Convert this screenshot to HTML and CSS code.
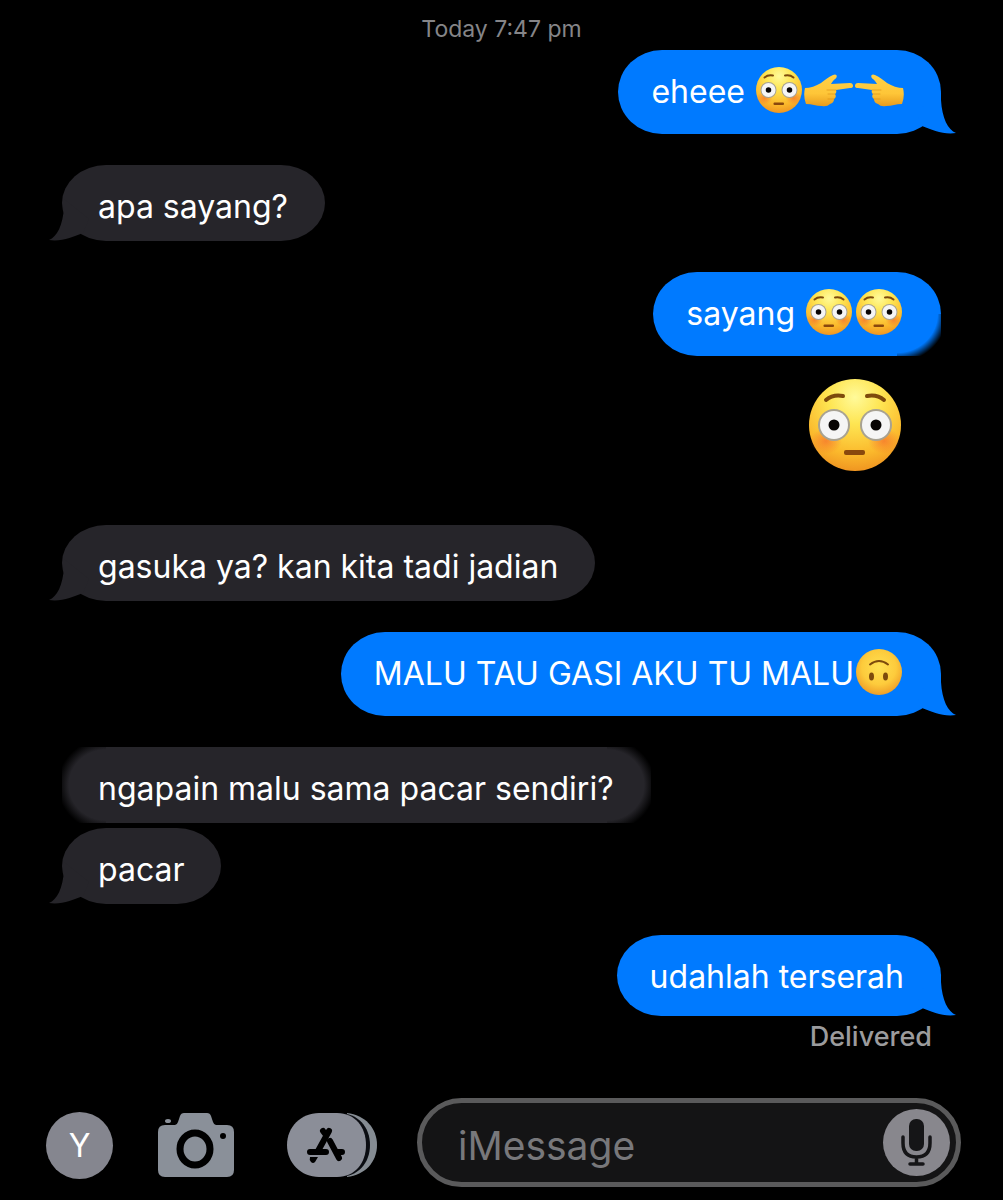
FILE: index.html
```html
<!DOCTYPE html>
<html lang="id">
<head>
<meta charset="utf-8">
<meta name="viewport" content="width=device-width, initial-scale=1">
<title>Messages</title>
<link rel="stylesheet" href="styles.css">
</head>
<body>
<svg class="defs" aria-hidden="true">
  <defs>
    <radialGradient id="face" cx="50%" cy="20%" r="82%">
      <stop offset="0" stop-color="#fffa9a"/>
      <stop offset=".35" stop-color="#fee552"/>
      <stop offset=".75" stop-color="#fbb92c"/>
      <stop offset="1" stop-color="#ef9220"/>
    </radialGradient>
    <radialGradient id="face-flat" cx="50%" cy="40%" r="62%">
      <stop offset="0" stop-color="#ffe052"/>
      <stop offset=".6" stop-color="#fdcb3c"/>
      <stop offset="1" stop-color="#ee9a26"/>
    </radialGradient>
    <radialGradient id="blush">
      <stop offset="0" stop-color="#f5672c" stop-opacity=".65"/>
      <stop offset="1" stop-color="#f5672c" stop-opacity="0"/>
    </radialGradient>
    <linearGradient id="skin" x1="0" y1="0" x2="0" y2="1">
      <stop offset="0" stop-color="#ffd147"/>
      <stop offset=".6" stop-color="#fec638"/>
      <stop offset="1" stop-color="#e99b1c"/>
    </linearGradient>
    <symbol id="flushed" viewBox="0 0 92 92">
      <circle cx="46" cy="46" r="46" fill="url(#face)"/>
      <ellipse cx="17" cy="62" rx="16" ry="13" fill="url(#blush)"/>
      <ellipse cx="75" cy="62" rx="16" ry="13" fill="url(#blush)"/>
      <circle cx="25" cy="46" r="16" fill="#a8a292"/>
      <circle cx="67" cy="46" r="16" fill="#a8a292"/>
      <circle cx="25" cy="46" r="14" fill="#f5f5f5"/>
      <circle cx="67" cy="46" r="14" fill="#f5f5f5"/>
      <circle cx="25" cy="46" r="5.5" fill="#080504"/>
      <circle cx="67" cy="46" r="5.5" fill="#080504"/>
      <path d="M17 21Q24 15 34 17M58 17Q68 15 75 21" fill="none" stroke="#7d4a0c" stroke-width="4" stroke-linecap="round"/>
      <rect x="35" y="71" width="21" height="5" rx="2" fill="#8a480d"/>
    </symbol>
    <symbol id="upside-down" viewBox="0 0 92 92">
      <circle cx="46" cy="46" r="46" fill="url(#face-flat)"/>
      <path d="M28 31Q46 17 64 31" fill="none" stroke="#7d4a0c" stroke-width="4" stroke-linecap="round"/>
      <ellipse cx="31" cy="55" rx="5" ry="8" fill="#7d4a0c"/>
      <ellipse cx="59" cy="55" rx="5" ry="8" fill="#7d4a0c"/>
    </symbol>
    <symbol id="point-right" viewBox="0 0 50 34">
      <path d="M1 15C6 15 12 13 17 10C21 7 24 4 29 2C33 0 34 4 31 6C29 8 28 9 27 11L46 10Q49 10 49 13Q49 15 46 15L32 17Q33 20 31 21Q33 24 30 26Q30 30 26 31Q23 34 18 33C12 33 8 31 2 31Q-1 23 1 15Z" fill="url(#skin)"/>
      <path d="M32 17L23 17M31 21L24 21M30 26L24 26" fill="none" stroke="#dd9418" stroke-width=".7" stroke-linecap="round"/>
    </symbol>
  </defs>
</svg>

<main class="thread">
  <time class="stamp">Today 7:47 pm</time>

  <div class="message sent tailed has-emoji">eheee <svg class="emoji" role="img" aria-label="flushed face"><use href="#flushed"/></svg><svg class="hand" role="img" aria-label="pointing right"><use href="#point-right"/></svg><svg class="hand flip" role="img" aria-label="pointing left"><use href="#point-right"/></svg></div>

  <div class="message received tailed">apa sayang?</div>

  <div class="message sent has-emoji fading">sayang <svg class="emoji" role="img" aria-label="flushed face"><use href="#flushed"/></svg><svg class="emoji" role="img" aria-label="flushed face"><use href="#flushed"/></svg></div>
  <svg class="big-emoji" role="img" aria-label="flushed face"><use href="#flushed"/></svg>

  <div class="message received tailed">gasuka ya? kan kita tadi jadian</div>

  <div class="message sent tailed has-emoji">MALU TAU GASI AKU TU MALU<svg class="emoji" role="img" aria-label="upside-down face"><use href="#upside-down"/></svg></div>

  <div class="message received soft">ngapain malu sama pacar sendiri?</div>
  <div class="message received tailed follow">pacar</div>

  <div class="message sent tailed">udahlah terserah</div>
  <p class="status">Delivered</p>
</main>

<form class="composer">
  <button type="button" class="tool avatar" aria-label="Profile Y">Y</button>
  <button type="button" class="tool camera" aria-label="Camera">
    <svg width="76" height="66" viewBox="0 0 76 66">
      <path d="M7 13H17Q19 13 20 10L22 4Q23 1 26 1H49Q52 1 53 4L55 10Q56 13 58 13H69Q76 13 76 20V58Q76 65 69 65H7Q0 65 0 58V20Q0 13 7 13Z" fill="#8a9099"/>
      <ellipse cx="10" cy="9" rx="3" ry="2" fill="#8a9099"/>
      <ellipse cx="37" cy="37" rx="15" ry="16" fill="none" stroke="#000" stroke-width="7"/>
      <circle cx="65" cy="24" r="3" fill="#000"/>
    </svg>
  </button>
  <button type="button" class="tool apps" aria-label="Apps">
    <svg width="90" height="66" viewBox="0 0 90 66">
      <path d="M60 1C78 3 90 16 90 33S78 63 60 65Z" fill="#858c93"/>
      <path d="M32 1H52C71 1 83 15 83 33S71 65 52 65H32Z" fill="#0b0d12"/>
      <path d="M32 1H50C68 1 79 15 79 33S68 65 50 65H32C14 65 0 51 0 33S14 1 32 1Z" fill="#8b8e98"/>
      <g fill="none" stroke="#000" stroke-linecap="round" stroke-width="6">
        <path d="M36 19L39 23M42 19L31 39"/>
        <path d="M43 29L52 46M23 40H39M50 40H55"/>
      </g>
      <path d="M23 45H31L28 50Q26 52 24 50Q22 48 23 45Z"/>
    </svg>
  </button>
  <div class="field">
    <input type="text" class="entry" placeholder="iMessage" aria-label="iMessage">
    <button type="button" class="mic" aria-label="Dictate">
      <svg width="67" height="67" viewBox="0 0 67 67">
        <rect x="26" y="10" width="15" height="32" rx="7" fill="#151517"/>
        <path d="M20 28V34Q20 48 33.500 48T47 34V28M33.500 48V55M27 55H40" fill="none" stroke="#151517" stroke-width="3.500" stroke-linecap="round"/>
      </svg>
    </button>
  </div>
</form>
</body>
</html>
```
FILE: styles.css
```css
* {
  box-sizing: border-box;
}

body {
  margin: 0;
  min-height: 100vh;
  display: flex;
  flex-direction: column;
  justify-content: space-between;
  background: #000;
  color: #fff;
  font-family: Inter, "Liberation Sans", sans-serif;
}

.defs {
  position: absolute;
  width: 0;
  height: 0;
}

.thread {
  display: flex;
  flex-direction: column;
  padding: 14px 62px 0;
}

.stamp {
  align-self: center;
  margin-bottom: -25px;
  color: #858588;
  font-size: 23px;
  line-height: 30px;
}

.message {
  position: relative;
  margin-top: 31px;
  font-size: 32px;
  line-height: 44px;
  border-radius: 44px / 50%;
}

.sent {
  align-self: flex-end;
  padding: 20px 37px 17px 33px;
  background: #007aff;
}

.has-emoji {
  padding-bottom: 20px;
}

.received {
  align-self: flex-start;
  padding: 20px 37px 12px 36px;
  background: #26252a;
}

.follow {
  margin-top: 5px;
}

/* Curled corner that hangs off the last bubble of a group */
.tailed::after {
  content: "";
  position: absolute;
  right: -15px;
  bottom: 0;
  width: 50px;
  height: 42px;
  background: inherit;
  clip-path: path("M35 0L35 8C36 26 42 38 50 41C38 43 26 38 16 34L10 20Z");
}

.received.tailed::after {
  right: auto;
  left: -13px;
  transform: scaleX(-1);
}

/* Bubbles without a tail dissolve at their rounded ends */
.soft {
  border-radius: 0;
  background:
    radial-gradient(ellipse 44px 42px at 100% 50%, #26252a 84%, transparent 110%) left / 44px 100% no-repeat,
    radial-gradient(ellipse 44px 42px at 0 50%, #26252a 84%, transparent 110%) right / 44px 100% no-repeat,
    linear-gradient(#26252a, #26252a) center / calc(100% - 88px) 100% no-repeat;
}

.fading {
  border-bottom-right-radius: 0;
  background:
    radial-gradient(ellipse 44px 42px at 0 0, #007aff 92%, transparent 114%) right bottom / 44px 42px no-repeat,
    linear-gradient(#007aff, #007aff) right top / 44px 42px no-repeat,
    linear-gradient(#007aff, #007aff) left / calc(100% - 44px) 100% no-repeat;
}

.emoji {
  width: 46px;
  height: 46px;
  margin: -12px 2px;
  vertical-align: 2px;
}

.hand {
  width: 50px;
  height: 34px;
  margin: -4px 0;
  vertical-align: 0;
}

.flip {
  transform: scaleX(-1);
}

.big-emoji {
  align-self: flex-end;
  width: 92px;
  height: 92px;
  margin: 23px 40px 23px 0;
}

.status {
  align-self: flex-end;
  margin: 6px 9px 0 0;
  color: #9b9b9d;
  font-size: 27px;
  font-weight: 500;
  line-height: 30px;
}

.composer {
  display: flex;
  align-items: center;
  padding: 0 42px 13px 46px;
}

button {
  flex: none;
  margin: 0;
  padding: 0;
  border: 0;
  background: none;
  font-family: inherit;
}

button svg {
  display: block;
}

.tool {
  margin-top: 5px;
}

.avatar {
  width: 67px;
  height: 67px;
  border-radius: 50%;
  background: #85868f;
  color: #fff;
  font-size: 32px;
}

.camera {
  margin-left: 45px;
}

.apps {
  margin-left: 53px;
}

.field {
  flex: 1;
  min-width: 0;
  display: flex;
  align-items: center;
  height: 89px;
  margin-left: 40px;
  padding: 0 6px 0 36px;
  border: 5px solid #5a5a5b;
  border-radius: 45px;
  background: #141415;
}

.entry {
  flex: 1;
  min-width: 0;
  padding: 6px 0 0;
  border: 0;
  outline: 0;
  background: none;
  color: #fff;
  font-family: inherit;
  font-size: 39px;
  line-height: 48px;
}

.entry::placeholder {
  color: #78787b;
  opacity: 1;
}

.mic {
  border-radius: 50%;
  background: #88878d;
}
```
